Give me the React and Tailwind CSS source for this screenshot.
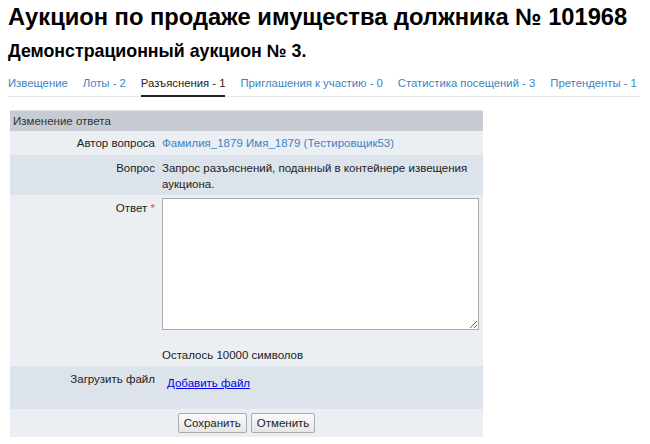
import React from 'react';

const tabs = [
  { label: 'Извещение' },
  { label: 'Лоты - 2' },
  { label: 'Разъяснения - 1', active: true },
  { label: 'Приглашения к участию - 0' },
  { label: 'Статистика посещений - 3' },
  { label: 'Претенденты - 1' },
];

const App = () => {
  return (
    <div className="min-h-screen bg-white text-[#222] font-['Liberation_Sans',Arial,sans-serif] pl-2 pt-[3px]">
      <h1 className="text-[23.7px] font-bold leading-[28px] text-black">
        Аукцион по продаже имущества должника № 101968
      </h1>
      <h2 className="text-[17.8px] font-bold leading-[22px] text-black mt-[9px]">
        Демонстрационный аукцион № 3.
      </h2>

      {/* Tabs */}
      <div className="flex gap-[15px] mt-[14px] w-[632px] border-b border-[#e6e6e6] text-[11.3px]">
        {tabs.map(tab => (
          <div
            key={tab.label}
            className={`pb-[5px] leading-[14px] whitespace-nowrap ${
              tab.active ? 'text-[#222] border-b-2 border-[#222] -mb-px' : 'text-[#3b84c4]'
            }`}
          >
            {tab.label}
          </div>
        ))}
      </div>

      {/* Form */}
      <div className="w-[473px] ml-[2px] mt-[13px] text-[11.5px] leading-[16px]">
        <div className="bg-[#c7ccd3] text-[#333] px-[3px] h-[21px] flex items-center border-t border-[#e5e7ea]">
          Изменение ответа
        </div>

        <div className="flex bg-[#ebeef2] h-[24px] items-center">
          <div className="w-[152px] shrink-0 text-right pr-[7px] text-[#222]">Автор вопроса</div>
          <div>
            <span className="text-[#3b84c4]">Фамилия_1879 Имя_1879</span>{' '}
            <span className="text-[#3b84c4]">(Тестировщик53)</span>
          </div>
        </div>

        <div className="flex bg-[#dde3ea] pt-[5px] h-[40px]">
          <div className="w-[152px] shrink-0 text-right pr-[7px]">Вопрос</div>
          <div className="w-[315px]">
            Запрос разъяснений, поданный в контейнере извещения аукциона.
          </div>
        </div>

        <div className="flex bg-[#ebeef2] pt-[3px] h-[171px]">
          <div className="w-[152px] shrink-0 text-right pr-[7px] pt-[2px]">
            Ответ <span className="text-[#d9534f]">*</span>
          </div>
          <div className="flex flex-col">
            <textarea className="w-[317px] h-[132px] bg-white border border-[#aaa] resize-y outline-none" />
            <div className="mt-[17px]">Осталось 10000 символов</div>
          </div>
        </div>

        <div className="flex bg-[#dde3ea] pt-[5px] h-[43px]">
          <div className="w-[152px] shrink-0 text-right pr-[7px]">Загрузить файл</div>
          <div className="pt-[4px] pl-[5px]">
            <a className="text-[#0000ee] underline" href="#">Добавить файл</a>
          </div>
        </div>

        <div className="flex justify-center gap-[4px] bg-[#ebeef2] h-[28px] pt-[4px]">
          <button className="h-[20px] px-[5px] border border-[#aaa] rounded-[2px] bg-gradient-to-b from-[#fafafa] to-[#e6e6e6] text-[11.5px] text-[#222]">
            Сохранить
          </button>
          <button className="h-[20px] px-[5px] border border-[#aaa] rounded-[2px] bg-gradient-to-b from-[#fafafa] to-[#e6e6e6] text-[11.5px] text-[#222]">
            Отменить
          </button>
        </div>
      </div>
    </div>
  );
};

export default App;
